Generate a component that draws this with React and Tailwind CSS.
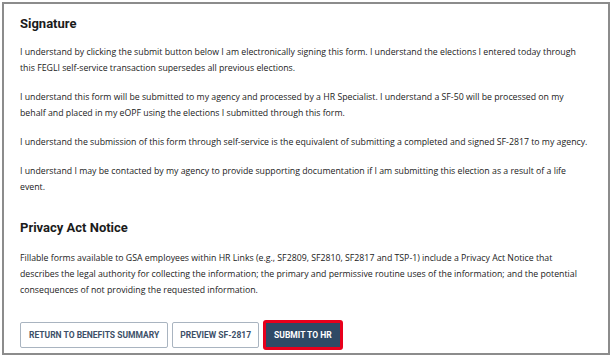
import React from "react";

const body = { fontFamily: '"Open Sans", "Liberation Sans", sans-serif' };
const head = { fontFamily: 'Roboto, "Liberation Sans", sans-serif' };

export default function App() {
  return (
    <div className="w-[612px] h-[359px] bg-white p-[2px]">
      <div className="h-[353px] border-2 border-[#8c8c8c] pl-[16px] pr-[14px] pt-[11px]">
        <h2 className="text-[13px] leading-[18px] font-bold text-[#1b1b1b]" style={head}>
          Signature
        </h2>
        <div className="mt-[11px] flex flex-col gap-[13px] text-[8.75px] leading-[16px] text-[#222]" style={body}>
          <p>
            I understand by clicking the submit button below I am electronically signing this form. I understand the elections I entered today through
            <br />
            this FEGLI self-service transaction supersedes all previous elections.
          </p>
          <p>
            I understand this form will be submitted to my agency and processed by a HR Specialist. I understand a SF-50 will be processed on my
            <br />
            behalf and placed in my eOPF using the elections I submitted through this form.
          </p>
          <p>
            I understand the submission of this form through self-service is the equivalent of submitting a completed and signed SF-2817 to my agency.
          </p>
          <p>
            I understand I may be contacted by my agency to provide supporting documentation if I am submitting this election as a result of a life
            <br />
            event.
          </p>
        </div>
        <h2 className="mt-[24px] text-[13px] leading-[18px] font-bold text-[#1b1b1b]" style={head}>
          Privacy Act Notice
        </h2>
        <p className="mt-[13px] text-[8.75px] leading-[16px] text-[#222]" style={body}>
          Fillable forms available to GSA employees within HR Links (e.g., SF2809, SF2810, SF2817 and TSP-1) include a Privacy Act Notice that
          <br />
          describes the legal authority for collecting the information; the primary and permissive routine uses of the information; and the potential
          <br />
          consequences of not providing the requested information.
        </p>
        <div className="mt-[22px] flex items-center gap-[4px]" style={head}>
          <button className="h-[26px] px-[8px] border border-[#a9b4c0] rounded-[2px] bg-white text-[8.5px] font-bold text-[#3d5068]">
            RETURN TO BENEFITS SUMMARY
          </button>
          <button className="h-[26px] px-[7px] border border-[#a9b4c0] rounded-[2px] bg-white text-[8.5px] font-bold text-[#3d5068]">
            PREVIEW SF-2817
          </button>
          <button className="h-[30px] px-[8px] border-[3px] border-[#e8001c] rounded-[3px] bg-[#2f4a66] text-[8.5px] font-bold text-white">
            SUBMIT TO HR
          </button>
        </div>
      </div>
    </div>
  );
}
